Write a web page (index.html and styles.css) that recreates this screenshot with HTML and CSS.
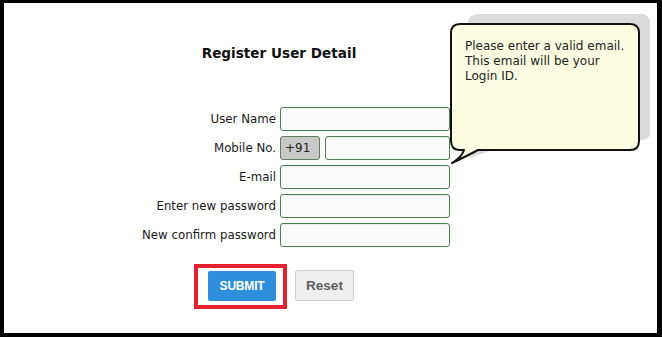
FILE: index.html
```html
<!DOCTYPE html>
<html>
<head>
<meta charset="utf-8">
<link rel="stylesheet" href="styles.css">
</head>
<body>
<div class="frame">
  <h2 class="title">Register User Detail</h2>
  <form class="form">
    <label class="lbl">User Name</label>
    <input class="inp" type="text">
    <label class="lbl">Mobile No.</label>
    <div class="mobile">
      <span class="code">+91</span>
      <input class="inp num" type="text">
    </div>
    <label class="lbl">E-mail</label>
    <input class="inp" type="text">
    <label class="lbl">Enter new password</label>
    <input class="inp" type="password">
    <label class="lbl">New confirm password</label>
    <input class="inp" type="password">
  </form>
  <div class="actions">
    <div class="highlight"><button class="btn submit" type="button">SUBMIT</button></div>
    <button class="btn reset" type="button">Reset</button>
  </div>
  <div class="tooltip">
    <svg class="bubble" width="222" height="160" viewBox="440 10 222 160">
      <path d="M478 14 H640 Q650 14 650 24 V132 Q650 140 640 140 H520 L470 158 Q468 152 475 151 H480 Z" fill="#dcdcdc"/>
      <path d="M478 14 H640 Q650 14 650 24 V132 Q650 140 640 140 H478 Q468 140 468 130 V24 Q468 14 478 14 Z" fill="#dcdcdc"/>
      <path d="M460 24 H630 Q639 24 639 33 V141 Q639 150 630 150 H478 Q467 156 452 163 Q462 157 464 150 H460 Q451 150 451 141 V33 Q451 24 460 24 Z" fill="#fdfde1" stroke="#111" stroke-width="2" stroke-linejoin="round"/>
    </svg>
    <p class="tip-text">Please enter a valid email.<br>This email will be your<br>Login ID.</p>
  </div>
</div>
</body>
</html>
```
FILE: styles.css
```css
html, body {
  margin: 0;
  padding: 0;
  background: #000;
}
.frame {
  position: relative;
  box-sizing: border-box;
  width: 662px;
  height: 337px;
  border-style: solid;
  border-color: #000;
  border-width: 3px 5px 4px 4px;
  background: #fff;
  font-family: "DejaVu Sans", Verdana, sans-serif;
  color: #222;
  overflow: hidden;
}
.title {
  margin: 42px 0 0 0;
  width: 550px;
  text-align: center;
  font-size: 13.6px;
  line-height: 16px;
  font-weight: bold;
  color: #111;
}
.form {
  margin: 46px 0 0 136px;
  display: grid;
  grid-template-columns: 136px 170px;
  column-gap: 4px;
  row-gap: 5px;
  align-items: center;
}
.lbl {
  text-align: right;
  font-size: 11.8px;
  white-space: nowrap;
  color: #1a1a1a;
  justify-self: end;
}
.inp {
  box-sizing: border-box;
  height: 24px;
  width: 170px;
  margin: 0;
  border: 1px solid #4e7f4e;
  border-radius: 3px;
  background: #fbfbfb;
  box-shadow: inset 0 1px 1px rgba(0,0,0,0.06);
  padding: 0 4px;
  font-family: inherit;
}
.mobile {
  display: flex;
  gap: 5px;
}
.code {
  box-sizing: border-box;
  width: 40px;
  height: 24px;
  border: 1px solid #5d7f5d;
  border-radius: 3px;
  background: #c9c9c9;
  font-size: 12px;
  line-height: 22px;
  padding-left: 4px;
  color: #222;
}
.inp.num {
  width: 125px;
}
.actions {
  margin: 17px 0 0 190px;
  display: flex;
  align-items: flex-start;
}
.highlight {
  box-sizing: border-box;
  width: 93px;
  height: 45px;
  border: 4px solid #e3202b;
  padding: 3px 0 0 10px;
}
.btn {
  box-sizing: border-box;
  margin: 0;
  font-family: "Liberation Sans", Arial, sans-serif;
  font-weight: bold;
  cursor: pointer;
}
.submit {
  width: 68px;
  height: 30px;
  border: none;
  border-radius: 2px;
  background: #2f8fdd;
  color: #fff;
  font-size: 12px;
  letter-spacing: -0.2px;
}
.reset {
  margin: 6px 0 0 8px;
  width: 59px;
  height: 31px;
  border: 1px solid #cfcfcf;
  border-radius: 2px;
  background: #efefef;
  color: #5e5e5e;
  font-size: 13.5px;
}
.tooltip {
  position: absolute;
  left: 436px;
  top: 7px;
  width: 222px;
  height: 160px;
}
.bubble {
  display: block;
}
.tip-text {
  position: absolute;
  left: 25px;
  top: 29px;
  margin: 0;
  font-size: 12px;
  line-height: 15px;
  color: #222;
  white-space: nowrap;
}
```
